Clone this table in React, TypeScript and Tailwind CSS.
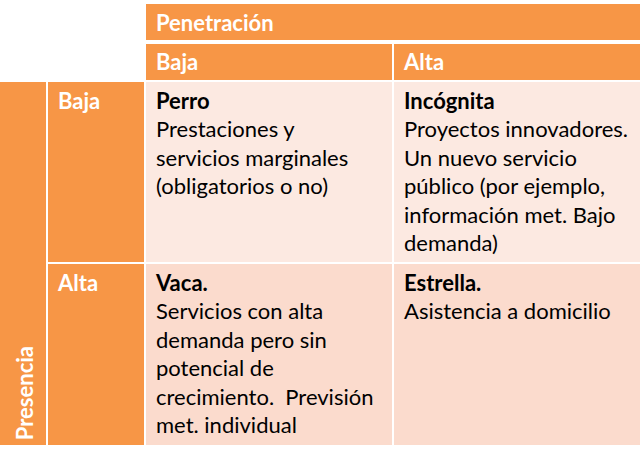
const font = { fontFamily: 'Lato, "Open Sans", sans-serif' }

function Cell({ title, lines }: { title: string; lines: string[] }) {
  return (
    <div className="px-[10px] pt-[4.5px] leading-[28.6px] text-black">
      <div className="font-bold">{title}</div>
      {lines.map((l) => (
        <div key={l} className="whitespace-pre">{l}</div>
      ))}
    </div>
  )
}

export default function App() {
  return (
    <div className="h-[457px] w-[640px] bg-white pt-[4px] text-[22px] leading-[28px]" style={font}>
      <div className="grid grid-cols-[46px_96px_246px_246px] grid-rows-[38px_36px_180px_181px] gap-[2px]">
        <div className="col-span-2 row-span-2" />
        <div className="col-span-2 h-[36px] bg-[#f79646] px-[10px] pt-[4.5px] font-bold text-white">Penetración</div>

        <div className="bg-[#f79646] px-[10px] pt-[3.5px] font-bold text-white">Baja</div>
        <div className="bg-[#f79646] px-[10px] pt-[3.5px] font-bold text-white">Alta</div>

        <div className="row-span-2 flex items-end bg-[#f79646] pb-[5px] pl-[11px]">
          <span className="rotate-180 font-bold text-white [writing-mode:vertical-rl]">Presencia</span>
        </div>
        <div className="bg-[#f79646] px-[10px] pt-[5px] font-bold text-white">Baja</div>
        <div className="bg-[#fce9e1]">
          <Cell title="Perro" lines={['Prestaciones y', 'servicios marginales', '(obligatorios o no)']} />
        </div>
        <div className="bg-[#fce9e1]">
          <Cell
            title="Incógnita"
            lines={['Proyectos innovadores.', 'Un nuevo servicio', 'público (por ejemplo,', 'información met. Bajo', 'demanda)']}
          />
        </div>

        <div className="bg-[#f79646] px-[10px] pt-[5px] font-bold text-white">Alta</div>
        <div className="bg-[#fbdbcd]">
          <Cell
            title="Vaca."
            lines={['Servicios con alta', 'demanda pero sin', 'potencial de', 'crecimiento.  Previsión', 'met. individual']}
          />
        </div>
        <div className="bg-[#fbdbcd]">
          <Cell title="Estrella." lines={['Asistencia a domicilio']} />
        </div>
      </div>
    </div>
  )
}
